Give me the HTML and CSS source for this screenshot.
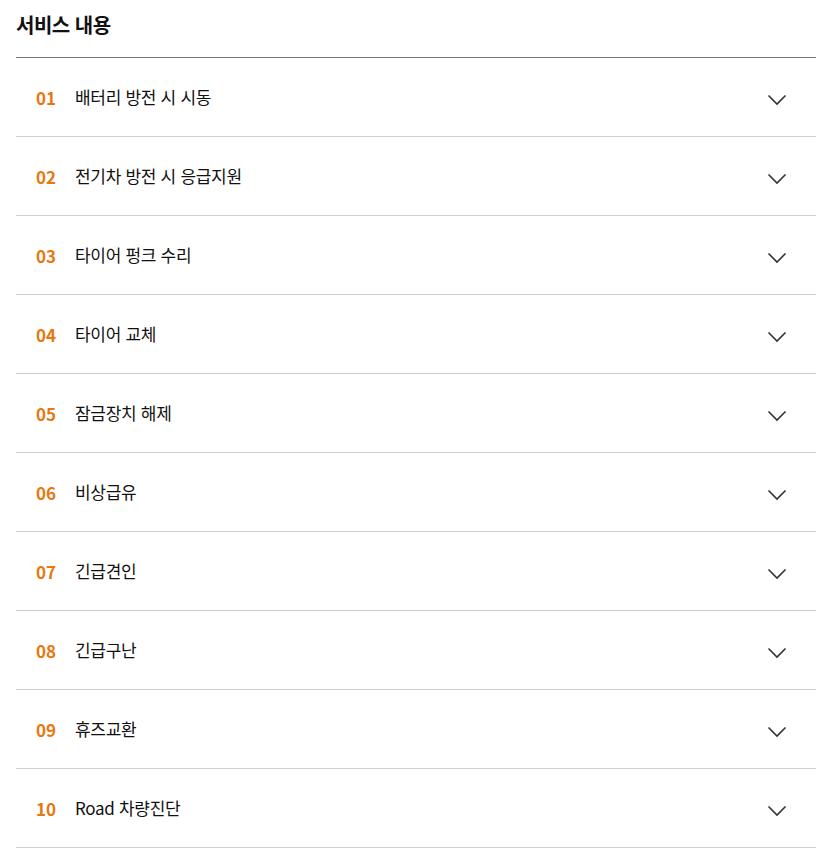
FILE: index.html
```html
<!DOCTYPE html>
<html lang="ko">
<head>
<meta charset="utf-8">
<title>서비스 내용</title>
<link rel="stylesheet" href="styles.css">
</head>
<body>
<div class="wrap">
  <h2 class="title">서비스 내용</h2>
  <ul class="list">
    <li class="row"><span class="num">01</span><span class="label">배터리 방전 시 시동</span><svg class="chev" viewBox="0 0 20 12"><path d="M1.5 1.5 L10 10 L18.5 1.5"/></svg></li>
    <li class="row"><span class="num">02</span><span class="label">전기차 방전 시 응급지원</span><svg class="chev" viewBox="0 0 20 12"><path d="M1.5 1.5 L10 10 L18.5 1.5"/></svg></li>
    <li class="row"><span class="num">03</span><span class="label">타이어 펑크 수리</span><svg class="chev" viewBox="0 0 20 12"><path d="M1.5 1.5 L10 10 L18.5 1.5"/></svg></li>
    <li class="row"><span class="num">04</span><span class="label">타이어 교체</span><svg class="chev" viewBox="0 0 20 12"><path d="M1.5 1.5 L10 10 L18.5 1.5"/></svg></li>
    <li class="row"><span class="num">05</span><span class="label">잠금장치 해제</span><svg class="chev" viewBox="0 0 20 12"><path d="M1.5 1.5 L10 10 L18.5 1.5"/></svg></li>
    <li class="row"><span class="num">06</span><span class="label">비상급유</span><svg class="chev" viewBox="0 0 20 12"><path d="M1.5 1.5 L10 10 L18.5 1.5"/></svg></li>
    <li class="row"><span class="num">07</span><span class="label">긴급견인</span><svg class="chev" viewBox="0 0 20 12"><path d="M1.5 1.5 L10 10 L18.5 1.5"/></svg></li>
    <li class="row"><span class="num">08</span><span class="label">긴급구난</span><svg class="chev" viewBox="0 0 20 12"><path d="M1.5 1.5 L10 10 L18.5 1.5"/></svg></li>
    <li class="row"><span class="num">09</span><span class="label">휴즈교환</span><svg class="chev" viewBox="0 0 20 12"><path d="M1.5 1.5 L10 10 L18.5 1.5"/></svg></li>
    <li class="row"><span class="num">10</span><span class="label">Road 차량진단</span><svg class="chev" viewBox="0 0 20 12"><path d="M1.5 1.5 L10 10 L18.5 1.5"/></svg></li>
  </ul>
</div>
</body>
</html>
```
FILE: styles.css
```css
html, body {
  margin: 0;
  padding: 0;
  background: #fff;
}
body {
  font-family: "Noto Sans CJK KR", "Noto Sans", sans-serif;
  color: #111;
}
.wrap {
  width: 800px;
  margin-left: 16px;
}
.title {
  margin: 0;
  padding: 10px 0 17px;
  font-size: 20px;
  line-height: 30px;
  font-weight: 700;
  color: #111;
  border-bottom: 1px solid #777;
  letter-spacing: -0.5px;
}
.list {
  list-style: none;
  margin: 0;
  padding: 0;
}
.row {
  display: flex;
  align-items: center;
  height: 78px;
  border-bottom: 1px solid #cfcfcf;
  padding: 0 29px 0 21px;
}
.num {
  width: 38px;
  flex: none;
  font-size: 17px;
  font-weight: 700;
  color: #e8770e;
  margin-left: -1px;
  margin-right: 1px;
}
.label {
  flex: 1;
  font-size: 17px;
  color: #111;
  letter-spacing: -0.3px;
  margin-bottom: 2px;
}
.chev {
  width: 20px;
  height: 12px;
  flex: none;
  fill: none;
  stroke: #333;
  stroke-width: 1.6;
  margin-top: 5px;
}
```
